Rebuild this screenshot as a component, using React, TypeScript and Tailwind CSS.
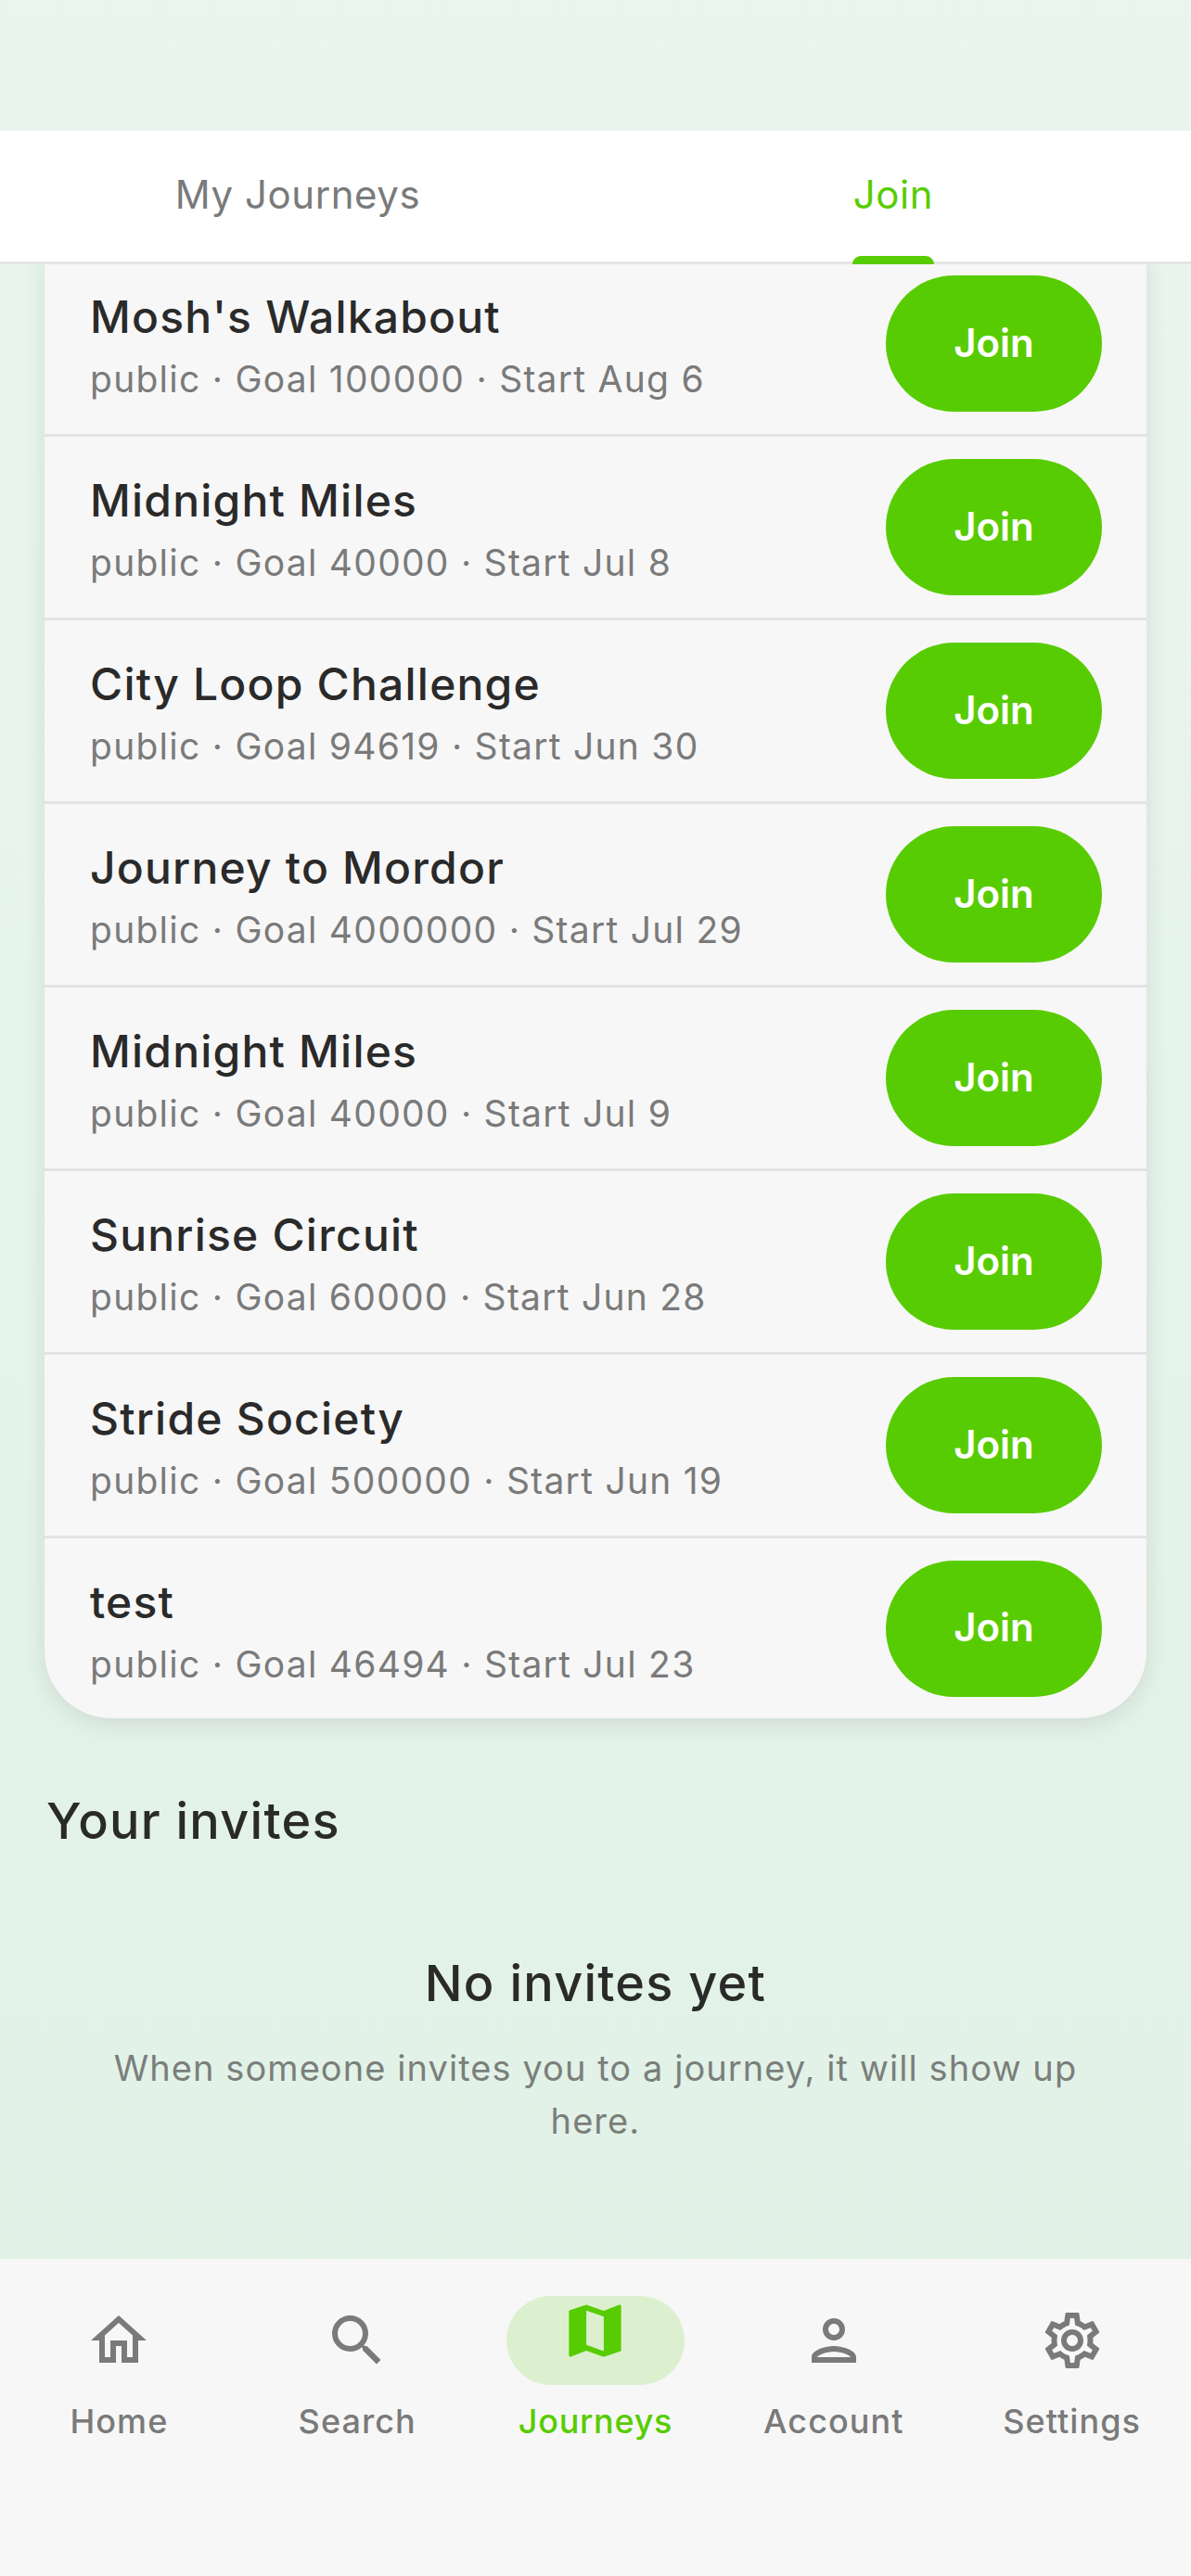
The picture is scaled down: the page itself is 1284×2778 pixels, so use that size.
import { MdMap, MdOutlineHome, MdOutlinePerson, MdOutlineSettings, MdSearch } from "react-icons/md";

const journeys = [
  { name: "Mosh's Walkabout", meta: "public · Goal 100000 · Start Aug 6" },
  { name: "Midnight Miles", meta: "public · Goal 40000 · Start Jul 8" },
  { name: "City Loop Challenge", meta: "public · Goal 94619 · Start Jun 30" },
  { name: "Journey to Mordor", meta: "public · Goal 4000000 · Start Jul 29" },
  { name: "Midnight Miles", meta: "public · Goal 40000 · Start Jul 9" },
  { name: "Sunrise Circuit", meta: "public · Goal 60000 · Start Jun 28" },
  { name: "Stride Society", meta: "public · Goal 500000 · Start Jun 19" },
  { name: "test", meta: "public · Goal 46494 · Start Jul 23" },
];

const navItems = [
  { label: "Home", icon: MdOutlineHome },
  { label: "Search", icon: MdSearch },
  { label: "Journeys", icon: MdMap, active: true },
  { label: "Account", icon: MdOutlinePerson },
  { label: "Settings", icon: MdOutlineSettings },
];

function JourneyRow({ name, meta, last }: { name: string; meta: string; last: boolean }) {
  return (
    <div className={`flex items-center justify-between pl-[49px] pr-[48px] ${last ? "h-[194px]" : "h-[198px] border-b-[3px] border-[#e3e3e3]"}`}>
      <div className="flex flex-col gap-[14px] pt-[7px]">
        <div className="text-[48px] leading-[56px] font-medium tracking-[1.2px] text-[#2a2a2a]">{name}</div>
        <div className="text-[39px] leading-[50px] tracking-[1.25px] text-[#7a7a7a]">{meta}</div>
      </div>
      <button type="button" className="flex h-[147px] w-[233px] items-center justify-center rounded-full bg-[#58cc02] pb-[3px] text-[42px] font-semibold text-white">
        Join
      </button>
    </div>
  );
}

export default function App() {
  return (
    <div className="flex h-[2778px] w-[1284px] flex-col overflow-hidden bg-gradient-to-b from-[#e9f6ee] to-[#e1f1e6] font-['Inter',sans-serif]">
      <div className="h-[141px] shrink-0" />

      <div className="relative z-10 flex h-[144px] shrink-0 border-b-[3px] border-[#e4e4e4] bg-white">
        <div className="flex flex-1 items-center justify-center pb-[4px] text-[42px] tracking-[0.55px] text-[#7a7a7a]">My Journeys</div>
        <div className="flex flex-1 items-center justify-center pb-[4px] text-[42px] tracking-[0.6px] text-[#58cc02]">Join</div>
        <div className="absolute right-[277px] -bottom-[3px] h-[9px] w-[88px] rounded-t-[9px] bg-[#58cc02]" />
      </div>

      <div className="min-h-0 flex-1 overflow-hidden">
        <div className="mx-[48px] -mt-[12px] rounded-b-[72px] bg-[#f7f7f7] shadow-[0_6px_24px_rgba(0,0,0,0.1)]">
          {journeys.map((j, i) => (
            <JourneyRow key={i} name={j.name} meta={j.meta} last={i === journeys.length - 1} />
          ))}
        </div>

        <div className="mt-[76px] pl-[50px] text-[54px] leading-[70px] font-medium tracking-[1.25px] text-[#2a2a2a]">Your invites</div>

        <div className="mt-[105px] flex flex-col items-center px-[100px] text-center">
          <div className="text-[54px] leading-[70px] font-medium tracking-[1.25px] text-[#2a2a2a]">No invites yet</div>
          <div className="mt-[28px] text-[38px] leading-[57px] tracking-[1.07px] text-[#7a7f7b]">
            When someone invites you to a journey, it will show up here.
          </div>
        </div>
      </div>

      <div className="flex h-[342px] shrink-0 bg-[#f7f7f7] pt-[40px]">
        {navItems.map((item) => {
          const Icon = item.icon;
          return (
            <div key={item.label} className="flex flex-1 flex-col items-center">
              <div className={`flex h-[96px] w-[192px] items-center justify-center rounded-full ${item.active ? "bg-[#dcf0cf] text-[#58cc02]" : "text-[#7a7a7a]"}`}>
                {item.active ? <Icon size={75} className="-translate-y-[11px]" /> : <Icon size={72} />}
              </div>
              <div className={`mt-[12px] text-[36px] leading-[54px] ${item.active ? "font-medium tracking-[0.7px] text-[#58cc02]" : "font-[450] tracking-[1.05px] text-[#7a7a7a]"}`}>
                {item.label}
              </div>
            </div>
          );
        })}
      </div>
    </div>
  );
}
